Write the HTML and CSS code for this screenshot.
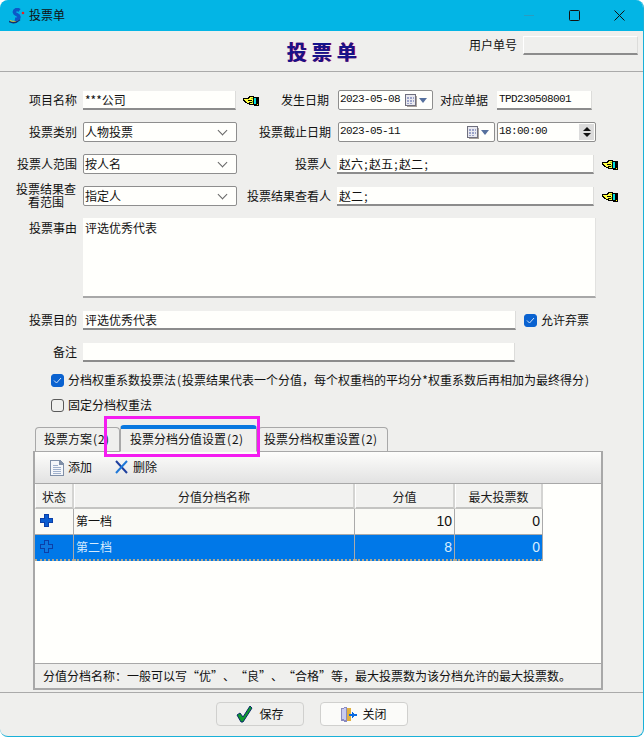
FILE: index.html
```html
<!DOCTYPE html>
<html lang="zh-CN">
<head>
<meta charset="utf-8">
<title>投票单</title>
<link rel="stylesheet" href="styles.css">
</head>
<body>
<svg class="defs" width="0" height="0" aria-hidden="true">
  <symbol id="hand" viewBox="0 0 16 11" shape-rendering="crispEdges">
    <path fill="#000" d="M0 3h5V2h1V1h5v1h5v9h-5v-1H6V9H4V8H2V7H1V6H0z"/>
    <path fill="#ffff40" d="M1 4h5V3h1V2h3v7H7V8H4V7H3V6H2V5H1z"/>
    <path fill="#000" d="M5 5h4v1H5zM6 7h3v1H6z"/>
    <path fill="#9ac020" d="M8 3h2v1H8zM9 6h1v2H9z"/>
    <path fill="#00e0e0" d="M11 3h2v6h-2z"/>
    <path fill="#ffff00" d="M14 9h1v1h-1z"/>
  </symbol>
  <symbol id="cal" viewBox="0 0 12 13" shape-rendering="crispEdges">
    <path fill="#a9a29c" d="M1 1h10v1h1v11H2v-1H1z"/>
    <path fill="#6f6f7d" d="M0 0h11v12H0z"/>
    <path fill="#e9e9ef" d="M1 1h9v10H1z"/>
    <path fill="#9aa2c8" d="M2 3h2v2H2zM5 3h2v2H5zM8 3h1v2H8zM2 6h2v2H2zM5 6h2v2H5zM8 6h1v2H8zM2 9h2v1H2zM5 9h2v1H5z"/>
  </symbol>
</svg>
<div class="window">
  <div class="titlebar">
    <svg class="logo" width="16" height="16" viewBox="0 0 16 16">
      <path fill="none" stroke="#12306e" stroke-width="1.500" d="M0 13.500c4 2 8 1 11-2"/>
      <path fill="none" stroke="#f0c020" stroke-width="1" d="M1 12.500c3 1.500 6 1 8-1"/>
      <path fill="none" stroke="#0c58c8" stroke-width="3.600" d="M10.500 2.500C8 .5 5 2 5.500 4.500c.5 2.500 4.500 2 4.500 4.500 0 2-2 2.500-4 2"/>
      <circle cx="14" cy="5" r="1.300" fill="#e82020"/>
    </svg>
    <span class="title-text">投票单</span>
    <span class="win-controls">
      <svg class="win-btn" width="11" height="11" viewBox="0 0 11 11"><path d="M0 5.500h10" stroke="#2a9cc0" fill="none"/></svg>
      <svg class="win-btn" width="11" height="11" viewBox="0 0 11 11"><rect x=".5" y=".5" width="10" height="10" rx="1" fill="none" stroke="#111"/></svg>
      <svg class="win-btn" width="11" height="11" viewBox="0 0 11 11"><path d="M.5.500l10 10M10.500.500l-10 10" stroke="#111" fill="none"/></svg>
    </span>
  </div>

  <div class="doc-head">
    <span></span>
    <h1 class="doc-title">投票单</h1>
    <div class="user-no"><span>用户单号</span><div class="field flat w-user"></div></div>
  </div>

  <div class="form">
    <div class="row">
      <span class="label l-main">项目名称</span>
      <div class="field w-153">***公司</div>
      <svg class="hand"><use href="#hand"/></svg>
      <span class="label l-a">发生日期</span>
      <div class="box w-95"><span class="mono grow">2023-05-08</span><svg class="cal"><use href="#cal"/></svg><i class="tri"></i></div>
      <span class="label l-b">对应单据</span>
      <div class="field mono w-95">TPD230508001</div>
    </div>
    <div class="row">
      <span class="label l-main">投票类别</span>
      <div class="box w-154"><span class="grow">人物投票</span><i class="chev"></i></div>
      <span class="label l-c">投票截止日期</span>
      <div class="box w-157"><span class="mono grow">2023-05-11</span><svg class="cal"><use href="#cal"/></svg><i class="tri"></i></div>
      <div class="box time"><span class="mono grow">18:00:00</span>
        <span class="spin"><i class="up"></i><i class="down"></i></span>
      </div>
    </div>
    <div class="row">
      <span class="label l-main">投票人范围</span>
      <div class="box w-154"><span class="grow">按人名</span><i class="chev"></i></div>
      <span class="label l-d">投票人</span>
      <div class="field w-257">赵六<b class="hw">;</b>赵五<b class="hw">;</b>赵二<b class="hw">;</b></div>
      <svg class="hand hand-r"><use href="#hand"/></svg>
    </div>
    <div class="row">
      <span class="label l-main tight">投票结果查<br>看范围</span>
      <div class="box w-154"><span class="grow">指定人</span><i class="chev"></i></div>
      <span class="label l-d">投票结果查看人</span>
      <div class="field w-257">赵二<b class="hw">;</b></div>
      <svg class="hand hand-r"><use href="#hand"/></svg>
    </div>
    <div class="row row-area">
      <span class="label l-main">投票事由</span>
      <div class="area">评选优秀代表</div>
    </div>
    <div class="row row-s">
      <span class="label l-main">投票目的</span>
      <div class="field w-433">评选优秀代表</div>
      <span class="check on ml-8"><svg width="9" height="7" viewBox="0 0 9 7"><path d="M1 3.500l2.500 2.500L8 1" fill="none" stroke="#cfe2fa"/></svg></span>
      <span class="check-text">允许弃票</span>
    </div>
    <div class="row row-s">
      <span class="label l-main">备注</span>
      <div class="field w-432"></div>
    </div>
    <div class="check-row first">
      <span class="check on"><svg width="9" height="7" viewBox="0 0 9 7"><path d="M1 3.500l2.500 2.500L8 1" fill="none" stroke="#cfe2fa"/></svg></span>
      <span class="check-text">分档权重系数投票法<b class="hw">(</b>投票结果代表一个分值，每个权重档的平均分<b class="hw">*</b>权重系数后再相加为最终得分<b class="hw">)</b></span>
    </div>
    <div class="check-row">
      <span class="check"></span>
      <span class="check-text">固定分档权重法</span>
    </div>
  </div>

  <div class="tabs-wrap">
    <div class="tabs">
      <div class="tab tab-1"><span class="tab-clip">投票方案<b class="hw">(</b><b class="hw">2</b><b class="hw">)</b></span></div>
      <div class="tab tab-2 active"><span>投票分档分值设置<b class="hw">(</b><b class="hw">2</b><b class="hw">)</b></span></div>
      <div class="tab tab-3"><span>投票分档权重设置<b class="hw">(</b><b class="hw">2</b><b class="hw">)</b></span></div>
    </div>
    <div class="highlight"></div>
    <div class="panel">
      <div class="toolbar">
        <span class="tool">
          <svg width="14" height="16" viewBox="0 0 14 16" shape-rendering="crispEdges">
            <path fill="#7f8fa8" d="M0 0h10l4 4v12H0z"/>
            <path fill="#f4f6fa" d="M1 1h8v4h4v10H1z"/>
            <path fill="#9fb0cc" d="M3 5h5v1H3zM3 7h8v1H3zM3 9h8v1H3zM3 11h8v1H3zM3 13h8v1H3z"/>
          </svg>添加</span>
        <span class="tool tool-del">
          <svg width="15" height="14" viewBox="0 0 15 14"><path d="M2 1l11 12" stroke="#1e3f9e" stroke-width="2" fill="none"/><path d="M13 1L2 13" stroke="#1f78d8" stroke-width="2" fill="none"/></svg>删除</span>
      </div>
      <div class="grid-area">
        <div class="grid">
          <div class="th">状态</div><div class="th">分值分档名称</div><div class="th">分值</div><div class="th">最大投票数</div>
          <div class="td center"><svg class="plus" width="13" height="13" viewBox="0 0 13 13" shape-rendering="crispEdges"><path fill="#0b3fa8" d="M4 0h5v4h4v5H9v4H4V9H0V4h4z"/><path fill="#0a5cd0" d="M5 1h3v4h4v3H8v4H5V8H1V5h4z"/></svg></div>
          <div class="td">第一档</div><div class="td num">10</div><div class="td num">0</div>
          <div class="td sel center"><svg class="plus" width="13" height="13" viewBox="0 0 13 13" shape-rendering="crispEdges"><path fill="#0b3fa8" d="M4 0h5v4h4v5H9v4H4V9H0V4h4z"/><path fill="#0f78e0" d="M5 1h3v4h4v3H8v4H5V8H1V5h4z"/></svg></div>
          <div class="td sel">第二档</div><div class="td sel num">8</div><div class="td sel num">0</div>
        </div>
      </div>
      <div class="status">分值分档名称：一般可以写“优”、“良”、“合格”等，最大投票数为该分档允许的最大投票数。</div>
    </div>
  </div>

  <div class="footer">
    <button class="btn btn-save">
      <svg width="17" height="18" viewBox="0 0 17 18"><path d="M1 10l3-2 3 4 7-11 2 2-9 14h-2z" fill="#0f9a2c" stroke="#0a2a6a"/></svg>保存</button>
    <button class="btn btn-close">
      <svg width="16" height="15" viewBox="0 0 16 15" shape-rendering="crispEdges">
        <path fill="#e0b040" d="M6 1h4v13H6z"/>
        <path fill="#8a8ac0" d="M0 1l6-1v15l-6-1z"/>
        <path fill="#c8ccf0" d="M1 2l4-1v12l-4-1z"/>
        <path fill="#0a6ae0" d="M8 7h3V5h1v1h1v1h3v2h-3v1h-1v1h-1V9H8z"/>
      </svg>关闭</button>
  </div>
</div>
</body>
</html>
```
FILE: styles.css
```css
* { box-sizing: border-box; }
html, body { margin: 0; padding: 0; background: #fff; }
body {
  width: 644px;
  height: 738px;
  overflow: hidden;
  font: 12px/1.2 "Noto Sans CJK SC", "Liberation Sans", sans-serif;
  color: #111;
  text-spacing-trim: space-all;
}
.defs { display: block; height: 0; }
.hw { display: inline-block; width: 6px; text-align: center; font-weight: 400; }
.window {
  width: 644px;
  height: 737px;
  background: #efefed;
  border-right: 1px solid #19b0d8;
  border-bottom: 1px solid #19b0d8;
  border-radius: 8px;
  overflow: hidden;
  display: flex;
  flex-direction: column;
}
.titlebar {
  height: 31px;
  flex: none;
  background: #03b5e5;
  display: flex;
  align-items: center;
  padding-left: 9px;
}
.logo { margin-right: 4px; }
.title-text { font-size: 12px; }
.win-controls { margin-left: auto; display: flex; gap: 34px; padding-right: 18px; }
.win-btn { display: block; }

.doc-head {
  height: 41px;
  flex: none;
  border-bottom: 1px solid #aaa;
  display: grid;
  grid-template-columns: 1fr auto 1fr;
  align-items: center;
}
.doc-title {
  margin: 2px 0 0;
  font-size: 20px;
  font-weight: 700;
  line-height: 1;
  letter-spacing: 5px;
  padding-left: 5px;
  color: #14148c;
  text-shadow: 1px 0 0 #c01060;
}
.user-no { justify-self: end; display: flex; align-items: center; gap: 6px; padding-right: 5px; margin-top: -12px; }

.form { padding-top: 18px; flex: none; }
.row { display: flex; align-items: center; height: 20px; margin-bottom: 12px; }
.row-area { height: 80px; align-items: flex-start; margin-bottom: 13px; }
.row-area .label { margin-top: 3px; }
.row-s { height: 19px; margin-bottom: 13px; }
.label { flex: none; text-align: right; white-space: nowrap; }
.l-main { width: 77px; margin-right: 6px; }
.l-main.tight {
  width: 60px;
  margin-left: 16px;
  margin-right: 7px;
  margin-top: -2px;
  line-height: 13px;
  text-align: center;
}
.l-a { width: 70px; margin-right: 9px; }
.l-b { width: 55px; margin-right: 9px; }
.l-c { width: 94px; margin-right: 7px; }
.l-d { width: 94px; margin-right: 6px; }

.field {
  flex: none;
  height: 19px;
  background: #fffffc;
  border-bottom: 2px solid #8c8c8c;
  border-right: 1px solid #dcdcda;
  padding: 0 2px;
  line-height: 17px;
  white-space: nowrap;
}
.flat { background: #efefed; border-top: 1px solid #fff; border-left: 1px solid #fff; }
.w-user { width: 115px; }
.w-153 { width: 153px; }
.w-95 { width: 95px; }
.w-154 { width: 154px; }
.w-157 { width: 157px; }
.w-257 { width: 257px; }
.w-433 { width: 433px; }
.w-432 { width: 432px; }
.box {
  flex: none;
  height: 20px;
  background: #fffffc;
  border: 1px solid #8e8e8e;
  border-radius: 2px;
  display: flex;
  align-items: center;
  padding: 0 1px;
}
.grow { flex: 1; white-space: nowrap; }
.mono {
  font-family: "Liberation Mono", monospace;
  font-size: 11px;
  letter-spacing: -0.6px;
}
.hand { width: 16px; height: 11px; margin-left: 7px; flex: none; }
.hand.hand-r { margin-left: 8px; }
.cal { width: 12px; height: 13px; flex: none; margin-right: 2px; }
.tri {
  width: 0; height: 0; flex: none;
  border-left: 4px solid transparent;
  border-right: 4px solid transparent;
  border-top: 5px solid #56709e;
  margin-right: 4px;
}
.chev {
  width: 7px; height: 7px; flex: none;
  border-right: 1px solid #666;
  border-bottom: 1px solid #666;
  transform: rotate(45deg) ;
  margin: -4px 9px 0 0;
}
.time { width: 99px; margin-left: 2px; }
.spin {
  width: 15px; height: 16px; flex: none;
  background: #dcdcdc;
  display: flex; flex-direction: column; align-items: center; justify-content: space-around;
  padding: 2px 0;
}
.up, .down { width: 0; height: 0; border-left: 4px solid transparent; border-right: 4px solid transparent; }
.up { border-bottom: 4px solid #111; }
.down { border-top: 4px solid #111; }
.area {
  width: 513px;
  height: 80px;
  background: #fffffc;
  border-bottom: 2px solid #a8a8a8;
  border-right: 1px solid #e2e2e0;
  padding: 1px 2px;
  line-height: 17px;
}
.check {
  width: 13px; height: 13px; flex: none;
  border: 1.500px solid #5a5a5a;
  border-radius: 3px;
  display: flex; align-items: center; justify-content: center;
}
.check.on { background: #0a62d0; border-color: #0a62d0; }
.ml-8 { margin-left: 8px; }
.check-text { margin-left: 4px; white-space: nowrap; }
.check-row { display: flex; align-items: center; height: 16px; padding-left: 51px; margin-bottom: 9px; }
.check-row.first { margin-top: -3px; }

.tabs-wrap { position: relative; flex: none; margin-top: 2px; padding-left: 33px; }
.tabs { height: 27px; display: flex; align-items: flex-end; padding-left: 2px; }
.tab {
  height: 24px;
  background: #efefed;
  border: 1px solid #a8a8a8;
  border-bottom: 0;
  border-radius: 4px 4px 0 0;
  display: flex; align-items: center;
  white-space: nowrap;
}
.tab-1 { width: 85px; padding-left: 8px; }
.tab-clip { width: 66px; overflow: hidden; display: block; }
.tab-2 {
  width: 137px; height: 27px;
  padding-left: 9px;
  padding-bottom: 2px;
  border-top: 4px solid #0a78e0;
  border-bottom: 1px solid #efefed;
  margin-bottom: -1px;
  position: relative;
  z-index: 1;
}
.tab-3 { width: 130px; margin-left: 1px; padding-left: 5px; }
.highlight {
  position: absolute;
  left: 104px; top: -8px;
  width: 156px; height: 41px;
  border: 3px solid #f41cf0;
  z-index: 2;
}
.panel {
  width: 570px;
  height: 239px;
  border: 2px solid #a8a8a8;
  border-top: 1px solid #a8a8a8;
  background: #fffffc;
  display: flex;
  flex-direction: column;
}
.toolbar {
  height: 32px;
  flex: none;
  background: linear-gradient(#fdfdfb, #e2e2e2);
  border-bottom: 1px solid #a8a8a8;
  display: flex;
  align-items: center;
  padding-left: 15px;
}
.tool { display: flex; align-items: center; gap: 4px; }
.tool-del { margin-left: 22px; }
.grid-area { flex: 1; }
.grid {
  width: 508px;
  display: grid;
  grid-template-columns: 39px 281px 100px 88px;
  grid-template-rows: 25px 26px 26px;
}
.th {
  background: #f2f2f0;
  border-bottom: 2px solid #c4c4c2;
  border-right: 2px solid #d4d4d2;
  border-left: 1px solid #fff;
  text-align: center;
  line-height: 25px;
  color: #1a1a1a;
}
.td {
  background: #fafaf6;
  border-right: 1px solid #aaa;
  border-bottom: 1px solid #aaa;
  padding: 0 2px;
  display: flex;
  align-items: center;
}
.center { justify-content: center; }
.num { justify-content: flex-end; font-family: "Liberation Sans", sans-serif; font-size: 14px; padding-right: 2px; }
.sel { background: #0078e8; color: #d6ecff; border-bottom: 2px dotted #b0a890; }
.plus { display: block; margin-right: 15px; margin-top: -2px; }
.status {
  height: 25px;
  flex: none;
  background: #efefed;
  border-top: 1px solid #a8a8a8;
  padding-left: 8px;
  line-height: 24px;
  white-space: nowrap;
}
.footer {
  flex: 1;
  margin-top: 2px;
  border-top: 1px solid #aaa;
  display: flex;
  gap: 16px;
  padding: 9px 0 0 216px;
  align-items: flex-start;
}
.btn {
  width: 88px;
  height: 24px;
  font: inherit;
  color: #111;
  background: #efefed;
  border: 1px solid #d0d0ce;
  border-radius: 4px;
  display: flex;
  align-items: center;
  justify-content: center;
  gap: 6px;
  padding: 0;
}
.btn-close { background: #fbfbf9; gap: 5px; }
```
